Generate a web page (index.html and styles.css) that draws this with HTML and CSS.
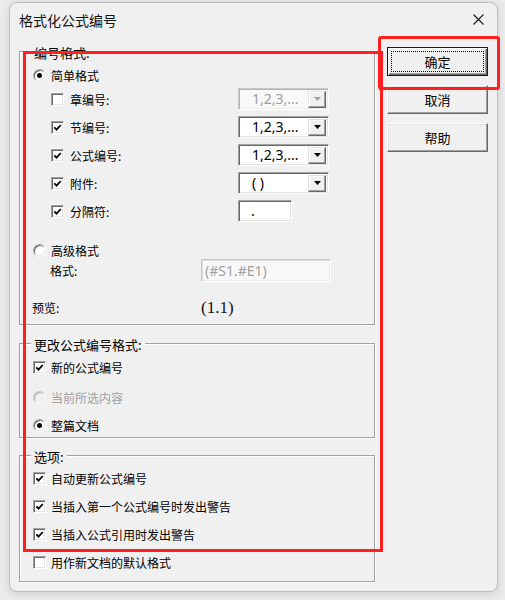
FILE: index.html
```html
<!DOCTYPE html>
<html lang="zh-CN">
<head>
<meta charset="utf-8">
<title>格式化公式编号</title>
<link rel="stylesheet" href="styles.css">
</head>
<body>
<div class="page">
  <div class="window">
    <div class="titlebar">
      <span class="title">格式化公式编号</span>
      <svg class="close" width="11" height="11" viewBox="0 0 11 11"><path d="M0.5 0.5 L10.5 10.5 M10.5 0.5 L0.5 10.5" stroke="#1b1b1b" stroke-width="1.1" fill="none"/></svg>
    </div>
    <div class="main">
      <div class="left">
        <div class="group g1">
          <div class="legend">编号格式:</div>
          <div class="row rrow r-simple"><span class="radio on"></span><span>简单格式</span></div>
          <div class="frow fr-first">
            <span class="cb"></span><span class="flabel">章编号:</span>
            <div class="combo disabled"><span class="val">1,2,3,...</span><span class="drop"><svg width="7" height="4" viewBox="0 0 7 4"><path d="M0 0 H7 L3.5 4 Z"/></svg></span></div>
          </div>
          <div class="frow">
            <span class="cb"><svg width="9" height="9" viewBox="0 0 9 9"><path d="M1.3 4.3 L3.5 6.6 L7.8 2" stroke="#000" stroke-width="1.8" fill="none"/></svg></span><span class="flabel">节编号:</span>
            <div class="combo"><span class="val">1,2,3,...</span><span class="drop"><svg width="7" height="4" viewBox="0 0 7 4"><path d="M0 0 H7 L3.5 4 Z"/></svg></span></div>
          </div>
          <div class="frow">
            <span class="cb"><svg width="9" height="9" viewBox="0 0 9 9"><path d="M1.3 4.3 L3.5 6.6 L7.8 2" stroke="#000" stroke-width="1.8" fill="none"/></svg></span><span class="flabel">公式编号:</span>
            <div class="combo"><span class="val">1,2,3,...</span><span class="drop"><svg width="7" height="4" viewBox="0 0 7 4"><path d="M0 0 H7 L3.5 4 Z"/></svg></span></div>
          </div>
          <div class="frow">
            <span class="cb"><svg width="9" height="9" viewBox="0 0 9 9"><path d="M1.3 4.3 L3.5 6.6 L7.8 2" stroke="#000" stroke-width="1.8" fill="none"/></svg></span><span class="flabel">附件:</span>
            <div class="combo"><span class="val">( )</span><span class="drop"><svg width="7" height="4" viewBox="0 0 7 4"><path d="M0 0 H7 L3.5 4 Z"/></svg></span></div>
          </div>
          <div class="frow">
            <span class="cb"><svg width="9" height="9" viewBox="0 0 9 9"><path d="M1.3 4.3 L3.5 6.6 L7.8 2" stroke="#000" stroke-width="1.8" fill="none"/></svg></span><span class="flabel">分隔符:</span>
            <div class="edit sep"><span class="val">.</span></div>
          </div>
          <div class="row rrow r-adv"><span class="radio"></span><span>高级格式</span></div>
          <div class="fmt-row">
            <span class="fmt-label">格式:</span>
            <div class="edit fmt disabled"><span class="val">(#S1.#E1)</span></div>
          </div>
          <div class="preview-row">
            <span class="pv-label">预览:</span>
            <span class="pv-val">(1.1)</span>
          </div>
        </div>

        <div class="group g2">
          <div class="legend">更改公式编号格式:</div>
          <div class="row crow g2-r1"><span class="cb"><svg width="9" height="9" viewBox="0 0 9 9"><path d="M1.3 4.3 L3.5 6.6 L7.8 2" stroke="#000" stroke-width="1.8" fill="none"/></svg></span><span>新的公式编号</span></div>
          <div class="row crow g2-r2 dis"><span class="radio off"></span><span>当前所选内容</span></div>
          <div class="row crow g2-r3"><span class="radio on"></span><span>整篇文档</span></div>
        </div>

        <div class="group g3">
          <div class="legend">选项:</div>
          <div class="row crow g3-r1"><span class="cb"><svg width="9" height="9" viewBox="0 0 9 9"><path d="M1.3 4.3 L3.5 6.6 L7.8 2" stroke="#000" stroke-width="1.8" fill="none"/></svg></span><span>自动更新公式编号</span></div>
          <div class="row crow g3-rn"><span class="cb"><svg width="9" height="9" viewBox="0 0 9 9"><path d="M1.3 4.3 L3.5 6.6 L7.8 2" stroke="#000" stroke-width="1.8" fill="none"/></svg></span><span>当插入第一个公式编号时发出警告</span></div>
          <div class="row crow g3-rn"><span class="cb"><svg width="9" height="9" viewBox="0 0 9 9"><path d="M1.3 4.3 L3.5 6.6 L7.8 2" stroke="#000" stroke-width="1.8" fill="none"/></svg></span><span>当插入公式引用时发出警告</span></div>
          <div class="row crow g3-rn"><span class="cb"></span><span>用作新文档的默认格式</span></div>
        </div>
      </div>

      <div class="buttons">
        <div class="btn default"><span class="focus">确定</span></div>
        <div class="btn">取消</div>
        <div class="btn">帮助</div>
      </div>
    </div>
  </div>
  <div class="mark mark-main"></div>
  <div class="mark mark-ok"></div>
</div>
</body>
</html>
```

FILE: styles.css
```css
html, body {
  margin: 0;
  padding: 0;
}
body {
  background: #ebebeb;
  font-family: "Noto Sans CJK SC", "Noto Sans", sans-serif;
  font-size: 12px;
  color: #000;
}
.page {
  position: relative;
  box-sizing: border-box;
  width: 505px;
  height: 600px;
  padding: 2px 0 0 9px;
  overflow: hidden;
}
.window {
  box-sizing: border-box;
  width: 489px;
  height: 590px;
  border: 1px solid #bdbdbd;
  border-radius: 8px;
  background: #f0f0f0;
  box-shadow: 0 2px 8px rgba(0, 0, 0, 0.12);
}
.titlebar {
  display: flex;
  align-items: center;
  height: 33px;
  padding: 0 13px 0 9px;
}
.title {
  flex: 1;
  font-size: 14px;
  color: #111;
}
.close {
  display: block;
}
.main {
  display: flex;
  gap: 12px;
  padding: 0 9px;
}
.left {
  width: 356px;
  padding-top: 15px;
}
.group {
  border: 1px solid #a0a0a0;
  box-shadow: 1px 1px 0 #fff, inset 1px 1px 0 #fff;
}
.legend {
  width: max-content;
  margin: -7px 0 0 11px;
  padding: 0 3px;
  font-size: 13px;
  line-height: 16px;
  background: #f0f0f0;
}
.row {
  display: flex;
  align-items: center;
  gap: 5px;
}
/* group 1 */
.g1 {
  padding-bottom: 7px;
}
.rrow {
  padding-left: 13px;
}
.r-simple {
  margin-top: 4px;
  height: 20px;
}
.frow {
  display: flex;
  align-items: center;
  height: 22px;
  margin-top: 6px;
  padding-left: 31px;
}
.frow.fr-first {
  margin-top: 3px;
}
.frow .cb {
  margin-right: 6px;
}
.flabel {
  width: 168px;
}
.r-adv {
  margin-top: 20px;
  height: 16px;
}
.fmt-row {
  display: flex;
  align-items: flex-end;
  height: 24px;
  padding-left: 30px;
}
.fmt-label {
  width: 151px;
  padding-bottom: 3px;
}
.preview-row {
  display: flex;
  align-items: center;
  height: 19px;
  margin-top: 16px;
  padding-left: 12px;
}
.pv-label {
  width: 169px;
}
.pv-val {
  font-family: "Liberation Serif", "DejaVu Serif", serif;
  font-size: 17px;
  color: #111;
}
/* group 2 */
.g2 {
  margin-top: 18px;
  padding-bottom: 3px;
}
.crow {
  height: 18px;
  padding-left: 13px;
}
.g2-r1 {
  margin-top: 5px;
}
.g2-r2 {
  margin-top: 12px;
}
.g2-r3 {
  margin-top: 10px;
}
.dis {
  color: #a0a0a0;
}
/* group 3 */
.g3 {
  margin-top: 17px;
  padding-bottom: 10px;
}
.g3-r1 {
  margin-top: 4px;
}
.g3-rn {
  margin-top: 10px;
}
/* controls */
.cb {
  box-sizing: border-box;
  width: 13px;
  height: 13px;
  flex: none;
  display: flex;
  align-items: center;
  justify-content: center;
  background: #fff;
  border: 1px solid;
  border-color: #a0a0a0 #fff #fff #a0a0a0;
  box-shadow: inset 1px 1px 0 #696969, inset -1px -1px 0 #e3e3e3;
}
.cb svg {
  display: block;
}
.radio {
  box-sizing: border-box;
  width: 13px;
  height: 13px;
  flex: none;
  border-radius: 50%;
  display: flex;
  align-items: center;
  justify-content: center;
  background: #fff;
  border: 1px solid;
  border-color: #a0a0a0 #fff #fff #a0a0a0;
  box-shadow: inset 1px 1px 0 #696969, inset -1px -1px 0 #e3e3e3;
}
.radio.off {
  background: #f0f0f0;
  border-color: #c8c8c8 #fff #fff #c8c8c8;
  box-shadow: inset 1px 1px 0 #b4b4b4, inset -1px -1px 0 #ececec;
}
.radio.on::after {
  content: "";
  width: 5px;
  height: 5px;
  border-radius: 50%;
  background: #000;
}
.combo, .edit {
  box-sizing: border-box;
  height: 22px;
  display: flex;
  align-items: center;
  background: #fff;
  border: 1px solid;
  border-color: #a0a0a0 #fff #fff #a0a0a0;
  box-shadow: inset 1px 1px 0 #696969, inset -1px -1px 0 #e3e3e3;
  font-family: "Noto Sans", "DejaVu Sans", sans-serif;
  font-size: 14px;
}
.combo {
  width: 91px;
  padding: 2px 2px 2px 1px;
}
.combo .val, .edit .val {
  flex: 1;
  padding-left: 12px;
  line-height: 18px;
  white-space: nowrap;
  overflow: hidden;
}
.drop {
  box-sizing: border-box;
  width: 18px;
  height: 17px;
  flex: none;
  display: flex;
  align-items: center;
  justify-content: center;
  background: #f0f0f0;
  border: 1px solid;
  border-color: #e3e3e3 #696969 #696969 #e3e3e3;
  box-shadow: inset -1px -1px 0 #a0a0a0, inset 1px 1px 0 #fff;
}
.drop svg {
  display: block;
  fill: #000;
}
.combo.disabled {
  background: #f8f8f8;
  color: #a0a0a0;
  border-color: #c8c8c8 #fff #fff #c8c8c8;
  box-shadow: inset 1px 1px 0 #b4b4b4, inset -1px -1px 0 #ececec;
}
.combo.disabled .drop svg {
  fill: #a0a0a0;
}
.sep {
  width: 54px;
}
.fmt {
  width: 130px;
  height: 23px;
}
.fmt .val {
  padding-left: 3px;
}
.edit.disabled {
  background: #f8f8f8;
  color: #a0a0a0;
  border-color: #c8c8c8 #fff #fff #c8c8c8;
  box-shadow: inset 1px 1px 0 #dcdcdc, inset -1px -1px 0 #ececec;
}
/* buttons */
.buttons {
  display: flex;
  flex-direction: column;
  gap: 9px;
  padding-top: 11px;
}
.btn {
  box-sizing: border-box;
  width: 101px;
  height: 29px;
  display: flex;
  align-items: center;
  justify-content: center;
  background: #f0f0f0;
  border: 1px solid;
  border-color: #fff #696969 #696969 #fff;
  box-shadow: inset -1px -1px 0 #a0a0a0, inset 1px 1px 0 #e3e3e3;
  font-size: 13px;
}
.btn.default {
  border-color: #1a1a1a;
  box-shadow: inset 1px 1px 0 #fff, inset -1px -1px 0 #696969, inset -2px -2px 0 #a0a0a0;
  padding: 3px;
}
.focus {
  box-sizing: border-box;
  flex: 1;
  align-self: stretch;
  display: flex;
  align-items: center;
  justify-content: center;
  border: 1px dotted #000;
}
/* annotation marks */
.mark {
  position: absolute;
  box-sizing: border-box;
  border: 3px solid #ff1f1f;
}
.mark-main {
  left: 23px;
  top: 51px;
  width: 360px;
  height: 501px;
}
.mark-ok {
  left: 378px;
  top: 36px;
  width: 122px;
  height: 54px;
  border-radius: 3px;
}
```
